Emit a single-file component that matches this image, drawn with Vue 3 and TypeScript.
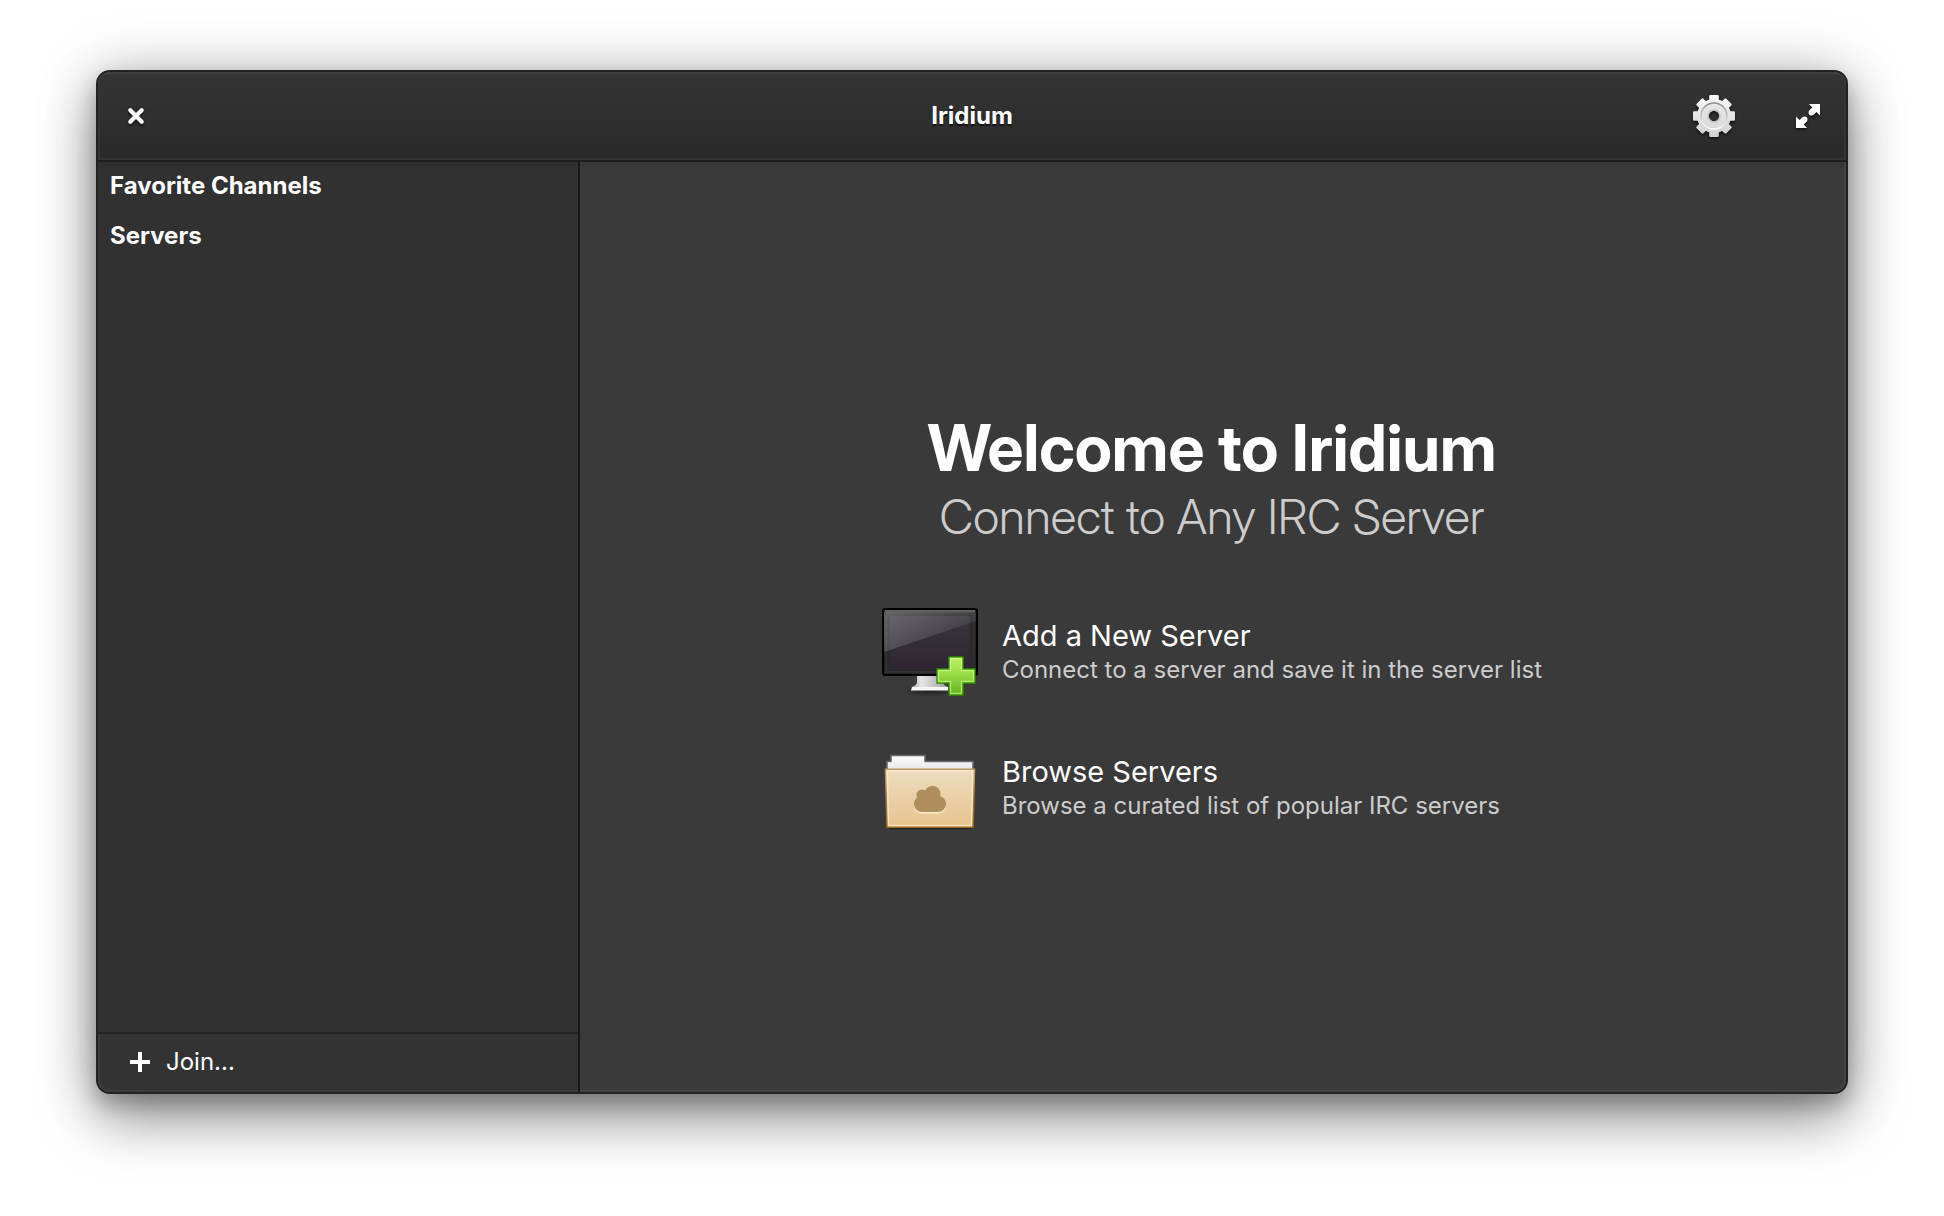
<script setup lang="ts">
interface SourceSection {
  id: string
  label: string
}

interface WelcomeAction {
  id: 'add' | 'browse'
  title: string
  description: string
}

const sections: SourceSection[] = [
  { id: 'favorites', label: 'Favorite Channels' },
  { id: 'servers', label: 'Servers' },
]

const actions: WelcomeAction[] = [
  {
    id: 'add',
    title: 'Add a New Server',
    description: 'Connect to a server and save it in the server list',
  },
  {
    id: 'browse',
    title: 'Browse Servers',
    description: 'Browse a curated list of popular IRC servers',
  },
]

const gearTeeth: number[] = [0, 45, 90, 135, 180, 225, 270, 315]
</script>

<template>
  <div class="desktop">
    <div class="window">
      <header class="headerbar">
        <div class="side start">
          <button class="icon-button" type="button" aria-label="Close">
            <svg width="24" height="24" viewBox="0 0 24 24" aria-hidden="true">
              <path d="M6.300 6.300L17.700 17.700M17.700 6.300L6.300 17.700" fill="none" stroke="#fff" stroke-width="4.200" stroke-linecap="round" />
            </svg>
          </button>
        </div>
        <h1 class="title">Iridium</h1>
        <div class="side end">
          <button class="icon-button" type="button" aria-label="Preferences">
            <svg width="48" height="48" viewBox="0 0 48 48" aria-hidden="true">
              <defs>
                <linearGradient id="gear-body" gradientUnits="userSpaceOnUse" x1="0" y1="3" x2="0" y2="45">
                  <stop offset="0" stop-color="#fafafa" />
                  <stop offset="1" stop-color="#d0d0d0" />
                </linearGradient>
                <linearGradient id="gear-ring" x1="0" y1="0" x2="0" y2="1">
                  <stop offset="0" stop-color="#8e8e8e" />
                  <stop offset="0.5" stop-color="#c4c4c4" />
                  <stop offset="1" stop-color="#fff" />
                </linearGradient>
                <mask id="gear-mask">
                  <circle cx="24" cy="24" r="17" fill="#fff" />
                  <rect
                    v-for="angle in gearTeeth"
                    :key="angle"
                    x="19.200"
                    y="3"
                    width="9.600"
                    height="12"
                    rx="1.300"
                    fill="#fff"
                    :transform="`rotate(${angle} 24 24)`"
                  />
                  <circle cx="24" cy="24" r="5.200" fill="#000" />
                </mask>
              </defs>
              <rect width="48" height="48" fill="url(#gear-body)" mask="url(#gear-mask)" />
              <circle cx="24" cy="24" r="13" fill="#dcdcdc" fill-opacity="0.500" stroke="url(#gear-ring)" stroke-width="1.600" mask="url(#gear-mask)" />
              <circle cx="24" cy="24" r="6" fill="none" stroke="#c2c2c2" stroke-width="1.400" />
            </svg>
          </button>
          <button class="icon-button" type="button" aria-label="Maximize">
            <svg width="32" height="32" viewBox="0 0 32 32" fill="#fff" aria-hidden="true">
              <path d="M17 4H28V15.500L24.500 12L21 15.200Q18.800 16.200 17.300 14.700Q15.800 13.200 16.800 11L20.200 7.500Z" />
              <path d="M17 4H28V15.500L24.500 12L21 15.200Q18.800 16.200 17.300 14.700Q15.800 13.200 16.800 11L20.200 7.500Z" transform="rotate(180 16 16)" />
            </svg>
          </button>
        </div>
      </header>

      <div class="body">
        <aside class="sidebar">
          <nav class="source-list" aria-label="Channels">
            <h2 v-for="section in sections" :key="section.id" class="section">{{ section.label }}</h2>
          </nav>
          <footer class="actionbar">
            <button class="join" type="button">
              <svg width="20" height="20" viewBox="0 0 20 20" aria-hidden="true">
                <path d="M8 0H12V8H20V12H12V20H8V12H0V8H8Z" fill="#fff" />
              </svg>
              <span>Join...</span>
            </button>
          </footer>
        </aside>

        <main class="welcome">
          <h2 class="welcome-title">Welcome to Iridium</h2>
          <p class="welcome-subtitle">Connect to Any IRC Server</p>
          <div class="actions">
            <button v-for="action in actions" :key="action.id" class="action" type="button">
              <svg v-if="action.id === 'add'" class="picture" viewBox="0 0 96 96" aria-hidden="true">
                <defs>
                  <linearGradient id="screen" x1="0" y1="0" x2="0" y2="1">
                    <stop offset="0" stop-color="#38343d" />
                    <stop offset="1" stop-color="#2e2733" />
                  </linearGradient>
                  <linearGradient id="glare" x1="0" y1="0" x2="1" y2="0.600">
                    <stop offset="0" stop-color="#fff" stop-opacity="0.260" />
                    <stop offset="1" stop-color="#fff" stop-opacity="0.040" />
                  </linearGradient>
                  <linearGradient id="stand" x1="0" y1="0" x2="1" y2="0">
                    <stop offset="0" stop-color="#aaa" />
                    <stop offset="0.250" stop-color="#e6e6e6" />
                    <stop offset="0.500" stop-color="#cfcfcf" />
                    <stop offset="1" stop-color="#9c9c9c" />
                  </linearGradient>
                  <linearGradient id="plus" x1="0" y1="0" x2="0" y2="1">
                    <stop offset="0" stop-color="#bdf266" />
                    <stop offset="0.450" stop-color="#98dc46" />
                    <stop offset="1" stop-color="#62b01c" />
                  </linearGradient>
                  <radialGradient id="stand-shadow">
                    <stop offset="0" stop-color="#000" stop-opacity="0.450" />
                    <stop offset="1" stop-color="#000" stop-opacity="0" />
                  </radialGradient>
                </defs>
                <ellipse cx="48" cy="87" rx="30" ry="6" fill="url(#stand-shadow)" />
                <path d="M35 70H61V78Q61 81 66 83V86H30V83Q35 81 35 78Z" fill="url(#stand)" />
                <path d="M30 83H66V86.500H29Z" fill="#f6f6f6" />
                <rect x="1" y="5" width="94" height="66" rx="2" fill="#242424" stroke="#000" stroke-width="2" />
                <path d="M3 7H93" stroke="#777" stroke-width="1.500" />
                <rect x="4.500" y="9" width="87" height="59" fill="none" stroke="#343235" stroke-width="2" />
                <rect x="7" y="11" width="82" height="55" fill="url(#screen)" stroke="#2a282b" stroke-width="2" />
                <path d="M2 8H94V17L2 48Z" fill="url(#glare)" />
                <path d="M67 53H81V65H93V79H81V91H67V79H55V65H67Z" fill="url(#plus)" stroke="#2f8b08" stroke-width="1.400" />
                <path d="M68.500 54.500H79.500V66.500H91.500V77.500H79.500V89.500H68.500V77.500H56.500V66.500H68.500Z" fill="none" stroke="#d6ff8c" stroke-opacity="0.600" stroke-width="1.300" />
              </svg>
              <svg v-else class="picture" viewBox="0 0 96 96" aria-hidden="true">
                <defs>
                  <linearGradient id="folder" x1="0" y1="0" x2="0" y2="1">
                    <stop offset="0" stop-color="#eddcc0" />
                    <stop offset="1" stop-color="#e7c48d" />
                  </linearGradient>
                  <linearGradient id="folder-edge" x1="0" y1="0" x2="0" y2="1">
                    <stop offset="0" stop-color="#b9985f" />
                    <stop offset="1" stop-color="#94681d" />
                  </linearGradient>
                  <linearGradient id="paper" x1="0" y1="0" x2="0" y2="1">
                    <stop offset="0" stop-color="#fff" />
                    <stop offset="1" stop-color="#e2e2e4" />
                  </linearGradient>
                </defs>
                <path d="M7 88.500H89" stroke="#000" stroke-opacity="0.350" stroke-width="2" />
                <path d="M5 32V21.500H9V15.500H43V21.500H91V32Z" fill="url(#paper)" stroke="#66666c" stroke-width="1.500" stroke-linejoin="round" />
                <path d="M3.500 29.200H92.500L91 87.200H5Z" fill="url(#folder)" stroke="url(#folder-edge)" stroke-width="1.600" stroke-linejoin="round" />
                <path d="M5.200 31H90.800L89.400 85.500H6.600Z" fill="none" stroke="#fff0d6" stroke-opacity="0.650" stroke-width="1.500" />
                <g transform="translate(0 1.500)" fill="#fbe9cb">
                  <circle cx="40" cy="64" r="8" />
                  <circle cx="56" cy="64" r="8" />
                  <rect x="40" y="60" width="16" height="12" />
                </g>
                <g fill="#ae8e5c">
                  <circle cx="40" cy="64" r="8" />
                  <circle cx="56" cy="64" r="8" />
                  <circle cx="40" cy="55" r="5.500" />
                  <circle cx="50.500" cy="54" r="8" />
                  <rect x="40" y="56" width="16" height="16" />
                </g>
              </svg>
              <span class="action-text">
                <span class="action-title">{{ action.title }}</span>
                <span class="action-description">{{ action.description }}</span>
              </span>
            </button>
          </div>
        </main>
      </div>
    </div>
  </div>
</template>

<style>
body {
  margin: 0;
  background: #fff;
}
</style>

<style scoped>
.desktop {
  box-sizing: border-box;
  display: flex;
  min-height: 100vh;
  padding: 70px 96px 122px;
  overflow: hidden;
  color: #fff;
  font-family: Inter, "Liberation Sans", sans-serif;
  font-size: 24px;
  line-height: 30px;
}

button {
  display: flex;
  align-items: center;
  margin: 0;
  padding: 0;
  border: 0;
  background: none;
  color: inherit;
  font: inherit;
  text-align: left;
  cursor: pointer;
}

h1,
h2,
p {
  margin: 0;
}

.window {
  display: flex;
  flex: 1;
  flex-direction: column;
  border: 2px solid #222;
  border-radius: 14px;
  background: #3a3a3a;
  box-shadow:
    0 0 60px rgba(0, 0, 0, 0.22),
    0 28px 56px rgba(0, 0, 0, 0.35),
    0 10px 20px rgba(0, 0, 0, 0.22);
}

.headerbar {
  display: grid;
  grid-template-columns: 1fr auto 1fr;
  align-items: center;
  height: 88px;
  border-bottom: 2px solid #1e1e1e;
  border-radius: 12px 12px 0 0;
  background: linear-gradient(#343434, #2a2a2a);
  box-shadow:
    inset 0 2px #3f4040,
    inset 2px 0 #343434,
    inset -2px 0 #343434,
    inset 0 -2px #333;
}

.side {
  display: flex;
  align-items: center;
}

.start {
  padding-left: 26px;
}

.end {
  justify-content: flex-end;
  gap: 54px;
  padding-right: 22px;
}

.icon-button svg {
  display: block;
  filter: drop-shadow(0 2px 1px rgba(0, 0, 0, 0.6));
}

.title {
  font-size: 24px;
  font-weight: 700;
  text-shadow: 0 2px 1px rgba(0, 0, 0, 0.6);
}

.body {
  display: flex;
  flex: 1;
}

.sidebar {
  box-sizing: border-box;
  display: flex;
  flex: 0 0 482px;
  flex-direction: column;
  border-right: 2px solid #181818;
  border-radius: 0 0 0 12px;
  background: linear-gradient(#2e2e2e, #313131 8px);
}

.source-list {
  flex: 1;
}

.section {
  padding: 9px 12px 11px;
  font-size: 24px;
  font-weight: 700;
}

.actionbar {
  display: flex;
  height: 58px;
  border-top: 2px solid #242424;
  border-radius: 0 0 0 12px;
  background: #333;
  box-shadow: inset 2px -2px #3b3b3b;
}

.join {
  gap: 16px;
  padding: 0 24px 2px 32px;
}

.welcome {
  display: flex;
  flex: 1;
  flex-direction: column;
  align-items: center;
  justify-content: center;
  padding: 0 2px 10px 0;
  border-radius: 0 0 12px;
  background: linear-gradient(#363636, #3a3a3a 8px);
  box-shadow: inset -2px -2px #424242;
}

.welcome-title,
.welcome-subtitle {
  font-family: "Inter Display", Inter, "Liberation Sans", sans-serif;
}

.welcome-title {
  font-size: 64px;
  font-weight: 700;
  line-height: 80px;
}

.welcome-subtitle {
  color: #ccc;
  font-size: 48px;
  font-weight: 300;
  line-height: 58px;
}

.actions {
  display: flex;
  flex-direction: column;
  gap: 40px;
  margin-top: 58px;
}

.action {
  gap: 24px;
}

.picture {
  flex: none;
  width: 96px;
  height: 96px;
}

.action-text {
  display: flex;
  flex-direction: column;
}

.action-title {
  font-size: 29px;
  line-height: 36px;
}

.action-description {
  color: #ccc;
  line-height: 32px;
}
</style>
